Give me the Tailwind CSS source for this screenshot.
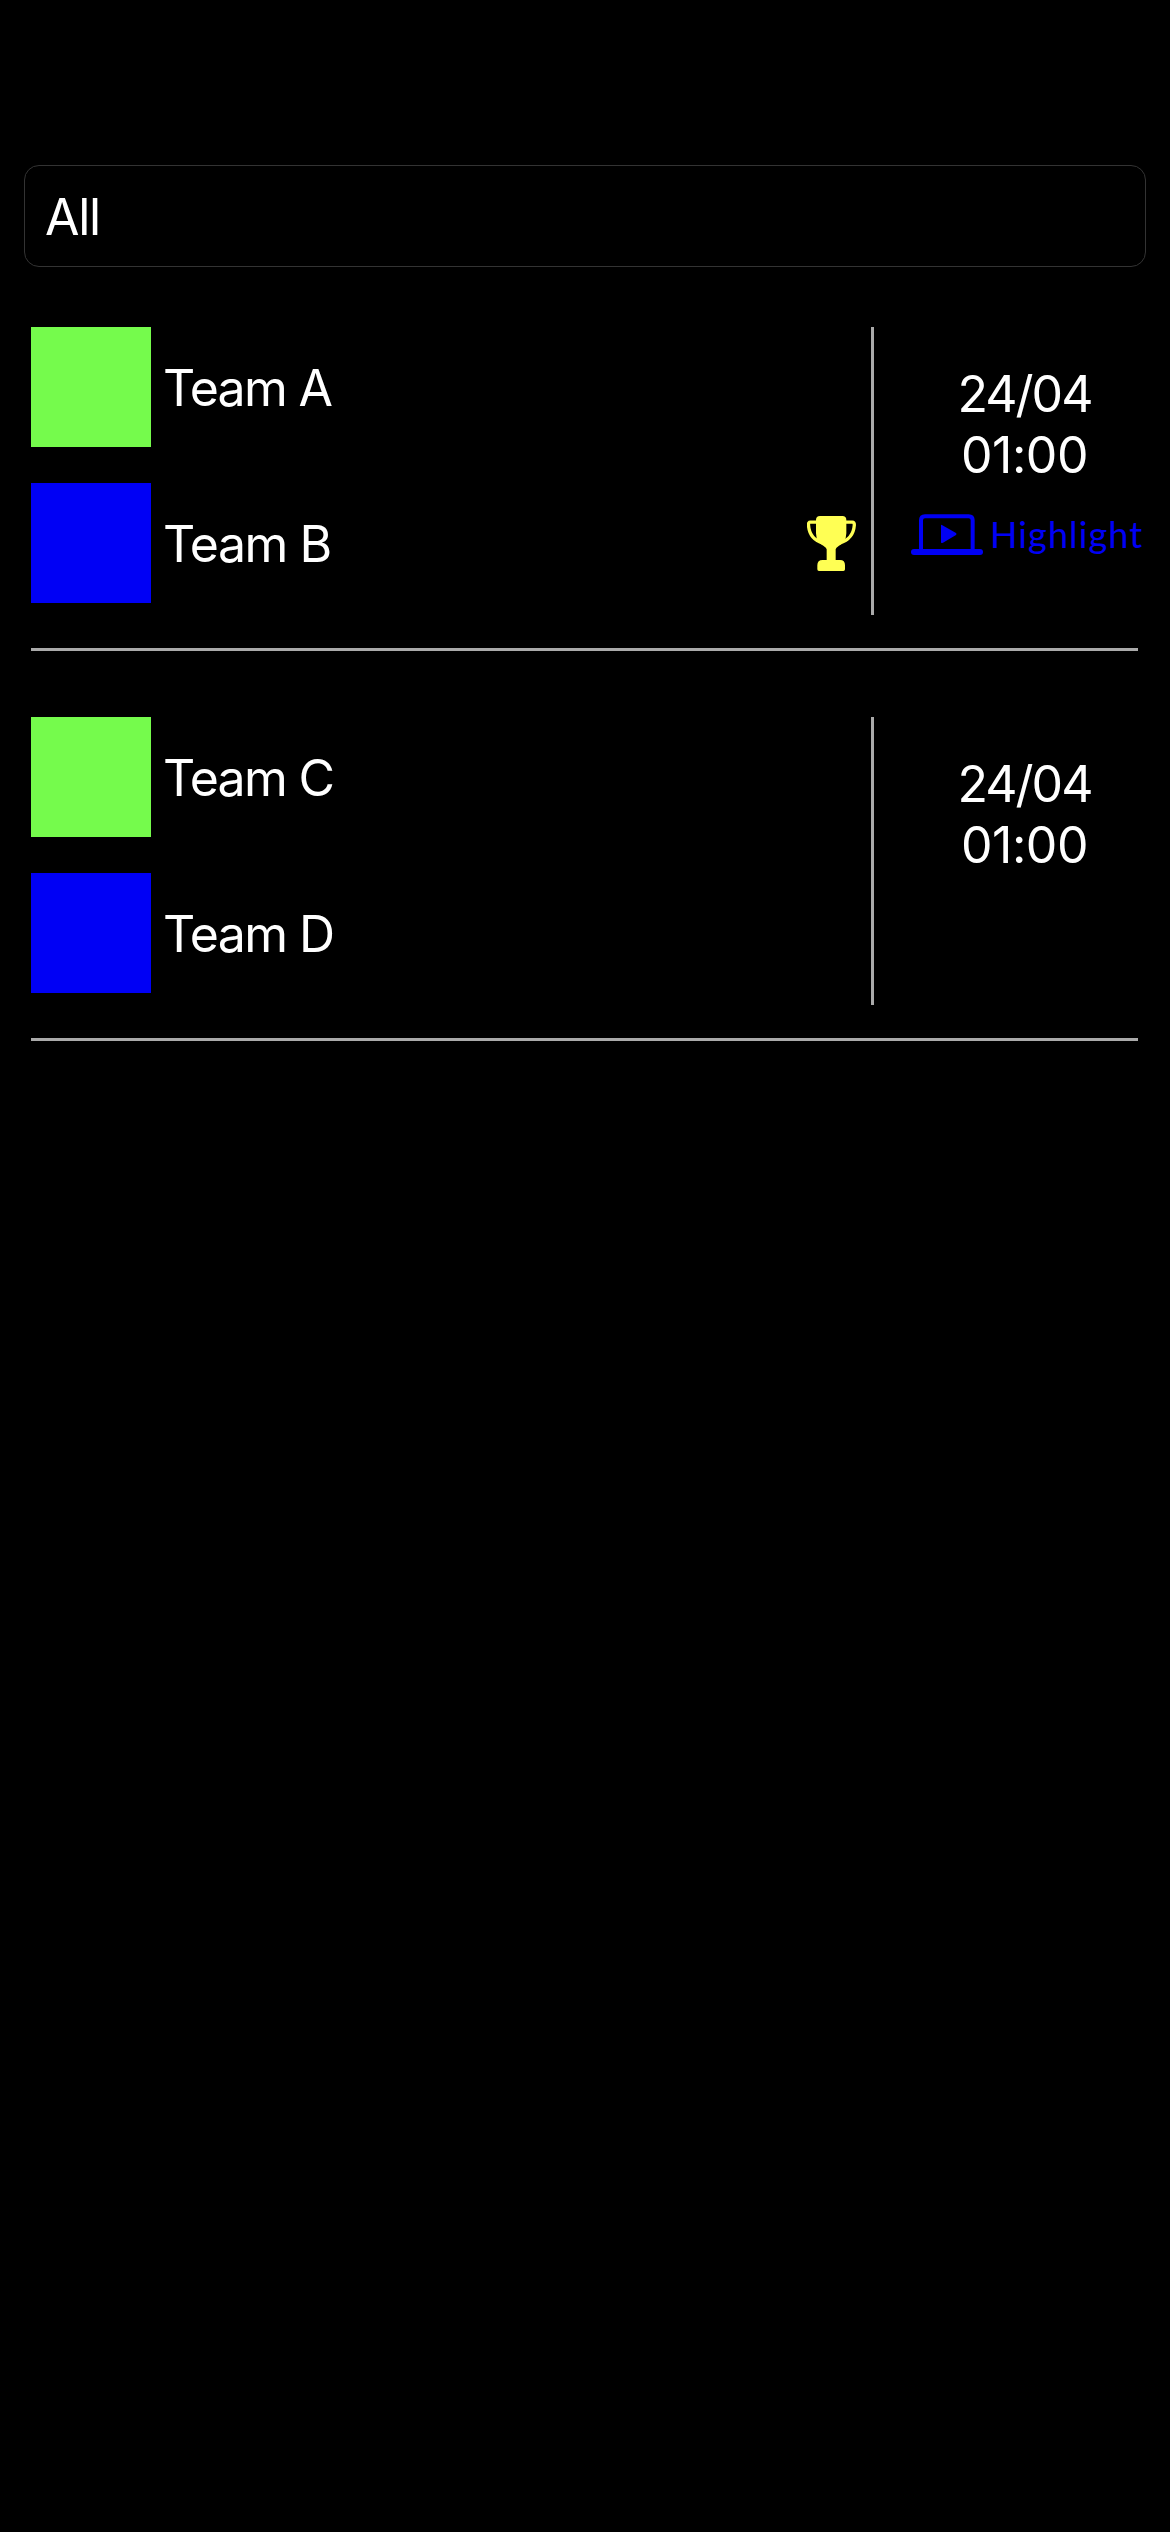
<!DOCTYPE html>
<html lang="en">
<head>
<meta charset="utf-8">
<title>Matches</title>
<script src="https://cdn.jsdelivr.net/npm/@tailwindcss/browser@4"></script>
</head>
<body class="bg-black">
<main class="flex h-[2532px] w-[1170px] flex-col overflow-hidden bg-black pt-[165px] font-['Inter',sans-serif] text-[50px] leading-[61px] text-white">
  <div class="mx-[24px] flex h-[102px] shrink-0 items-center rounded-[15px] border border-[#333] pl-[20px]">
    <span class="pt-[2px] tracking-[-1.3px]">All</span>
  </div>

  <section class="ml-[31px] mt-[60px] flex h-[324px] w-[1107px] shrink-0 items-start border-b-3 border-[#aaa]">
    <div class="flex w-[840px] shrink-0 flex-col gap-[36px]">
      <div class="flex h-[120px] items-center">
        <div class="size-[120px] bg-[#75fb4c]"></div>
        <span class="ml-[12px] pt-[2px] tracking-[-1.7px]">Team A</span>
      </div>
      <div class="flex h-[120px] items-center">
        <div class="size-[120px] bg-[#0000f5]"></div>
        <span class="ml-[12px] pt-[2px] tracking-[-1.5px]">Team B</span>
        <svg class="ml-auto mr-[15px] h-[55px] w-[49px]" viewBox="51 48 147 165" fill="#ffff54">
          <path d="M90 48H157Q169 48 169 60V100Q168 128 147 137Q137 143 137 148V180H150Q165 180 165 196V208Q165 213 160 213H87Q82 213 82 208V196Q82 180 98 180H110V148Q110 143 100 137Q79 128 78 100V60Q78 48 90 48Z"/>
          <path d="M80 66.500H61Q55 66.500 55.500 75Q58 117 99 129M167 66.500H187Q193 66.500 193 75Q190 117 149 129" fill="none" stroke="#ffff54" stroke-width="10"/>
        </svg>
      </div>
    </div>
    <div class="flex h-[288px] w-[267px] shrink-0 flex-col items-center border-l-3 border-[#aaa] pl-[37px] pt-[37px]">
      <span class="tracking-[-2px]">24/04</span>
      <span class="tracking-[-0.5px]">01:00</span>
      <a class="mt-[24px] flex items-center self-start whitespace-nowrap text-[36px] leading-[48px] text-[#0000f5]">
        <svg class="mr-[7px] h-[41px] w-[72px] shrink-0" viewBox="63 75 216 123" fill="#0000f5">
          <path d="M93 181V94Q93 81.500 105 81.500H236Q248 81.500 248 94V181" fill="none" stroke="#0000f5" stroke-width="12"/>
          <rect x="63" y="180" width="216" height="18" rx="9"/>
          <path d="M153 110Q153 106 157 108.500L198 132Q201 135 198 138L159 161Q153 164 153 160Z"/>
        </svg>
        <span class="font-['Lato',sans-serif] tracking-[1.1px]">Highlight</span>
      </a>
    </div>
  </section>

  <section class="ml-[31px] mt-[66px] flex h-[324px] w-[1107px] shrink-0 items-start border-b-3 border-[#aaa]">
    <div class="flex w-[840px] shrink-0 flex-col gap-[36px]">
      <div class="flex h-[120px] items-center">
        <div class="size-[120px] bg-[#75fb4c]"></div>
        <span class="ml-[12px] pt-[2px] tracking-[-1.7px]">Team C</span>
      </div>
      <div class="flex h-[120px] items-center">
        <div class="size-[120px] bg-[#0000f5]"></div>
        <span class="ml-[12px] pt-[2px] tracking-[-1.6px]">Team D</span>
      </div>
    </div>
    <div class="flex h-[288px] w-[267px] shrink-0 flex-col items-center border-l-3 border-[#aaa] pl-[37px] pt-[37px]">
      <span class="tracking-[-2px]">24/04</span>
      <span class="tracking-[-0.5px]">01:00</span>
    </div>
  </section>
</main>
</body>
</html>
